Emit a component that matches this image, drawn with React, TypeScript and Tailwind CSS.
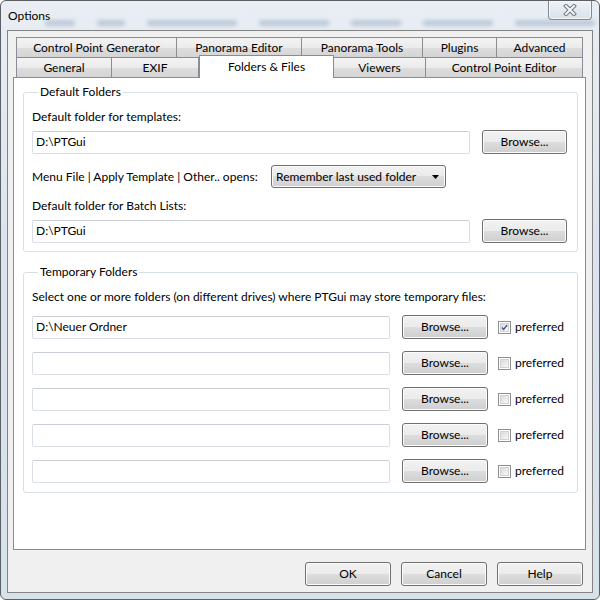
import React from "react";
import clsx from "clsx";

const row1 = [
  { label: "Control Point Generator", w: 161 },
  { label: "Panorama Editor", w: 125 },
  { label: "Panorama Tools", w: 121 },
  { label: "Plugins", w: 74 },
  { label: "Advanced", w: 86 },
];

const row2 = [
  { label: "General", w: 96 },
  { label: "EXIF", w: 87 },
  { label: "Folders & Files", w: 135, active: true },
  { label: "Viewers", w: 92 },
  { label: "Control Point Editor", w: 157 },
];

const tempFolders = [
  { path: "D:\\Neuer Ordner", preferred: true },
  { path: "", preferred: false },
  { path: "", preferred: false },
  { path: "", preferred: false },
  { path: "", preferred: false },
];

// blurred tab strip of the main window seen through the glass frame
const ghostTabs = [30, 28, 90, 70, 50, 70, 80, 50];

const btnFace =
  "rounded-[3px] border border-[#707070] bg-[linear-gradient(to_bottom,#f2f2f2_0%,#ebebeb_49%,#dddddd_50%,#cfcfcf_100%)] shadow-[inset_0_0_0_1px_#fbfbfb]";

function Button({ children, className }: { children: React.ReactNode; className?: string }) {
  return (
    <button type="button" className={clsx("flex items-center justify-center text-[12px] text-black", btnFace, className)}>
      {children}
    </button>
  );
}

function TextBox({ value, className }: { value: string; className?: string }) {
  return (
    <div
      className={clsx(
        "flex h-[23px] items-center rounded-[2px] border border-[#dadfe6] border-t-[#c9ced6] bg-white pl-[3px] text-[12px] text-black",
        className
      )}
    >
      {value}
    </div>
  );
}

function CheckBox({ checked }: { checked: boolean }) {
  return (
    <div className="flex h-[13px] w-[13px] items-center justify-center border border-[#8e8f8f] bg-white">
      <div className="flex h-[9px] w-[9px] items-center justify-center border border-[#d2d2d2] bg-[linear-gradient(135deg,#d9d9d9,#f9f9f9)]">
        {checked && (
          <svg width="9" height="9" viewBox="0 0 9 9">
            <path d="M1.2 4.6 L3.4 7 L7.8 1.4" fill="none" stroke="#3e568c" strokeWidth="1.8" />
          </svg>
        )}
      </div>
    </div>
  );
}

export default function App() {
  return (
    <div className="relative flex h-[600px] w-[600px] flex-col overflow-hidden rounded-[6px] border border-[#5c5f63] bg-[linear-gradient(to_bottom,#e9eef4_0%,#dbe4ee_40%,#d7e1ea_100%)] font-['Lato',sans-serif] text-black">
      <div className="pointer-events-none absolute left-[44px] top-[19px] flex gap-[22px] opacity-40 blur-[2px]">
        {ghostTabs.map((w, i) => (
          <div key={i} style={{ width: w }} className="h-[6px] rounded-[2px] bg-[#7b93ad]" />
        ))}
      </div>

      {/* title bar */}
      <div className="relative flex h-[29px] items-start justify-between">
        <div className="pl-[7px] pt-[7px] text-[12px] leading-[16px] text-black">Options</div>
        <div className="mr-[7px] flex h-[19px] w-[44px] items-center justify-center rounded-b-[4px] border border-t-0 border-[#7d8894] bg-[linear-gradient(to_bottom,#eef2f6,#d9e1ea)] shadow-[inset_0_0_0_1px_#f6f8fa]">
          <svg width="14" height="12" viewBox="0 0 14 12">
            <path d="M3 2 L11 10 M11 2 L3 10" stroke="#6f7780" strokeWidth="4" strokeLinecap="square" />
            <path d="M3 2 L11 10 M11 2 L3 10" stroke="#f4f6f8" strokeWidth="2" strokeLinecap="square" />
          </svg>
        </div>
      </div>

      {/* client area */}
      <div className="relative mx-[6px] mb-[6px] flex flex-1 flex-col border border-[#838383] bg-[#f0f0f0]">
        {/* tabs */}
        <div className="pl-[8px] pt-[6px]">
          <div className="flex h-[20px]">
            {row1.map((t, i) => (
              <div
                key={t.label}
                style={{ width: t.w }}
                className={clsx(
                  "flex items-center justify-center border-r border-t border-[#898c95] bg-[linear-gradient(to_bottom,#f3f3f3_0%,#ebebeb_50%,#dddddd_51%,#d5d5d5_100%)] text-[12px]",
                  i === 0 && "border-l"
                )}
              >
                {t.label}
              </div>
            ))}
          </div>
          <div className="flex h-[20px] items-end">
            {row2.map((t, i) =>
              t.active ? (
                <div
                  key={t.label}
                  style={{ width: t.w }}
                  className="relative z-10 -mb-px flex h-[23px] items-start justify-center border-x border-t border-[#898c95] bg-white pt-[2px] text-[12px]"
                >
                  {t.label}
                </div>
              ) : (
                <div
                  key={t.label}
                  style={{ width: t.w }}
                  className={clsx(
                    "flex h-[20px] items-center justify-center border-r border-t border-[#898c95] bg-[linear-gradient(to_bottom,#f3f3f3_0%,#ebebeb_50%,#dddddd_51%,#d5d5d5_100%)] pt-px text-[12px]",
                    i === 0 && "border-l"
                  )}
                >
                  {t.label}
                </div>
              )
            )}
          </div>
        </div>

        {/* tab page */}
        <div className="ml-[5px] mr-[6px] flex h-[473px] flex-col border border-[#898c95] bg-white pl-[9px] pr-[7px] text-[12px] leading-[16px]">
          <fieldset className="mt-[6px] rounded-[3px] border border-[#d5dfe5] pb-[8px] pl-[8px] pr-[10px] pt-[9px]">
            <legend className="ml-[6px] px-[2px] leading-[16px]">Default Folders</legend>
            <div>Default folder for templates:</div>
            <div className="mt-[5px] flex h-[24px] items-center justify-between">
              <TextBox value="D:\PTGui" className="w-[438px]" />
              <Button className="h-[24px] w-[85px]">Browse...</Button>
            </div>
            <div className="mt-[11px] flex h-[23px] items-center">
              <div className="w-[239px]">Menu File | Apply Template | Other.. opens:</div>
              <div className={clsx("flex h-[23px] w-[175px] items-center justify-between pl-[4px] pr-[6px]", btnFace)}>
                <span>Remember last used folder</span>
                <svg width="7" height="4" viewBox="0 0 7 4">
                  <path d="M0 0 H7 L3.5 4 Z" fill="#000" />
                </svg>
              </div>
            </div>
            <div className="mt-[10px]">Default folder for Batch Lists:</div>
            <div className="mt-[5px] flex h-[24px] items-center justify-between">
              <TextBox value="D:\PTGui" className="w-[438px]" />
              <Button className="h-[24px] w-[85px]">Browse...</Button>
            </div>
          </fieldset>

          <fieldset className="mt-[12px] rounded-[3px] border border-[#d5dfe5] pb-[9px] pl-[8px] pr-[10px] pt-[9px]">
            <legend className="ml-[6px] px-[2px] leading-[16px]">Temporary Folders</legend>
            <div>Select one or more folders (on different drives) where PTGui may store temporary files:</div>
            <div className="mt-[10px] flex flex-col gap-[12px]">
              {tempFolders.map((f, i) => (
                <div key={i} className="flex h-[24px] items-center">
                  <TextBox value={f.path} className="h-[22px] w-[358px]" />
                  <Button className="ml-[12px] h-[24px] w-[86px]">Browse...</Button>
                  <div className="ml-[10px]">
                    <CheckBox checked={f.preferred} />
                  </div>
                  <span className="ml-[4px]">preferred</span>
                </div>
              ))}
            </div>
          </fieldset>
        </div>

        {/* dialog buttons */}
        <div className="flex justify-end gap-[10px] pr-[9px] pt-[12px]">
          <Button className="h-[24px] w-[86px]">OK</Button>
          <Button className="h-[24px] w-[86px]">Cancel</Button>
          <Button className="h-[24px] w-[86px]">Help</Button>
        </div>
      </div>
    </div>
  );
}
